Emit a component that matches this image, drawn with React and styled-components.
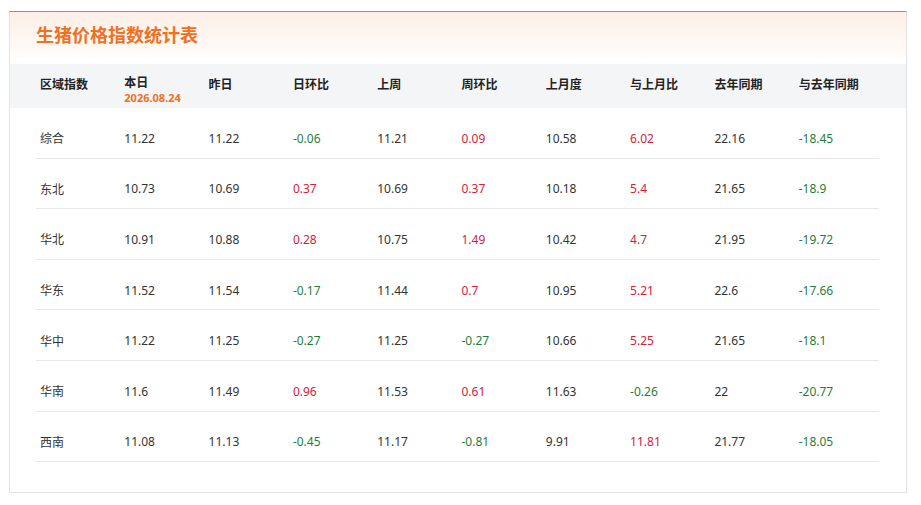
import styled, { createGlobalStyle } from "styled-components";

const GlobalStyle = createGlobalStyle`
  body {
    margin: 0;
    padding: 11px 0 0 9px;
    background: #fff;
    font-family: "Noto Sans", "Noto Sans CJK SC", sans-serif;
  }
`;

const Card = styled.div`
  width: 898px;
  height: 482px;
  box-sizing: border-box;
  border: 1px solid #e2e2e2;
  border-top: 1px solid #e47a3a;
  background: #fff;
`;

const Header = styled.div`
  height: 45px;
  display: flex;
  align-items: center;
  padding-left: 26px;
  background: linear-gradient(180deg, #fdefe6 0%, #fffcfa 100%);
`;

const Title = styled.h1`
  margin: 0 0 1px;
  font-size: 18px;
  font-weight: 700;
  color: #f0711f;
`;

const HeadRow = styled.div`
  margin-top: 7px;
  height: 44px;
  background: #f4f5f7;
  padding: 0 27px 0 26px;
  display: grid;
  grid-template-columns: repeat(10, 1fr);
  align-items: center;
`;

const HeadCell = styled.div`
  padding-left: 4px;
  font-size: 12px;
  font-weight: 700;
  color: #222;
  line-height: 16px;
  margin-top: ${(p) => (p.$sub ? "8px" : "-2px")};
`;

const DateTag = styled.div`
  font-size: 11px;
  font-weight: 700;
  color: #f0711f;
  line-height: 14px;
`;

const Body = styled.div`
  padding: 0 27px 0 26px;
`;

const Row = styled.div`
  height: 50.6px;
  box-sizing: border-box;
  padding-top: 11px;
  border-bottom: 1px solid #e8e8e8;
  display: grid;
  grid-template-columns: repeat(10, 1fr);
  align-items: center;
`;

const Cell = styled.div`
  padding-left: 4px;
  font-size: 12px;
  color: ${(p) => (p.$tone === "up" ? "#d3213c" : p.$tone === "down" ? "#1f7d3c" : "#333")};
`;

const columns = ["区域指数", "本日", "昨日", "日环比", "上周", "周环比", "上月度", "与上月比", "去年同期", "与去年同期"];
const changeCols = [3, 5, 7, 9];

const rows = [
  ["综合", "11.22", "11.22", "-0.06", "11.21", "0.09", "10.58", "6.02", "22.16", "-18.45"],
  ["东北", "10.73", "10.69", "0.37", "10.69", "0.37", "10.18", "5.4", "21.65", "-18.9"],
  ["华北", "10.91", "10.88", "0.28", "10.75", "1.49", "10.42", "4.7", "21.95", "-19.72"],
  ["华东", "11.52", "11.54", "-0.17", "11.44", "0.7", "10.95", "5.21", "22.6", "-17.66"],
  ["华中", "11.22", "11.25", "-0.27", "11.25", "-0.27", "10.66", "5.25", "21.65", "-18.1"],
  ["华南", "11.6", "11.49", "0.96", "11.53", "0.61", "11.63", "-0.26", "22", "-20.77"],
  ["西南", "11.08", "11.13", "-0.45", "11.17", "-0.81", "9.91", "11.81", "21.77", "-18.05"],
];

const toneOf = (i, v) => {
  if (!changeCols.includes(i)) return undefined;
  return v.startsWith("-") ? "down" : "up";
};

export default function App() {
  return (
    <>
      <GlobalStyle />
      <Card>
        <Header>
          <Title>生猪价格指数统计表</Title>
        </Header>
        <HeadRow>
          {columns.map((c, i) => (
            <HeadCell key={c} $sub={i === 1}>
              {c}
              {i === 1 && <DateTag>2026.08.24</DateTag>}
            </HeadCell>
          ))}
        </HeadRow>
        <Body>
          {rows.map((r) => (
            <Row key={r[0]}>
              {r.map((v, i) => (
                <Cell key={i} $tone={toneOf(i, v)}>
                  {v}
                </Cell>
              ))}
            </Row>
          ))}
        </Body>
      </Card>
    </>
  );
}
